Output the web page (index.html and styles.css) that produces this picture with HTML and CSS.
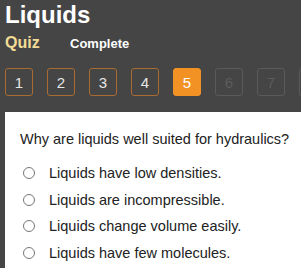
FILE: index.html
```html
<!DOCTYPE html>
<html lang="en">
<head>
  <meta charset="UTF-8" />
  <title>Liquids</title>
  <link rel="stylesheet" href="styles.css">
</head>
<body>
  <div class="header">
    <h1>Liquids</h1>
    <div class="tabs">
      <span class="tab-quiz">Quiz</span>
      <span class="tab-complete">Complete</span>
    </div>
    <div class="steps">
      <span class="step done">1</span>
      <span class="step done">2</span>
      <span class="step done">3</span>
      <span class="step done">4</span>
      <span class="step current">5</span>
      <span class="step">6</span>
      <span class="step">7</span>
      <span class="step">8</span>
    </div>
  </div>

  <div class="panel">
    <p class="question">Why are liquids well suited for hydraulics?</p>
    <label class="option"><span class="radio"></span>Liquids have low densities.</label>
    <label class="option"><span class="radio"></span>Liquids are incompressible.</label>
    <label class="option"><span class="radio"></span>Liquids change volume easily.</label>
    <label class="option"><span class="radio"></span>Liquids have few molecules.</label>
  </div>
</body>
</html>
```

FILE: styles.css
```css
body {
  font-family: 'Liberation Sans', Arial, sans-serif;
  background-color: #454545;
  margin: 0;
  padding: 0;
  overflow: hidden;
}
.header {
  padding-left: 5px;
}
h1 {
  color: #fff;
  font-size: 24px;
  margin: 1px 0 0 0;
  line-height: 28px;
}
.tabs {
  display: flex;
  align-items: baseline;
  margin-top: 5px;
  height: 20px;
}
.tab-quiz {
  color: #f3dc95;
  font-weight: bold;
  font-size: 16px;
  width: 65px;
}
.tab-complete {
  color: #fff;
  font-weight: bold;
  font-size: 13px;
}
.steps {
  display: flex;
  gap: 14px;
  margin-top: 14px;
  white-space: nowrap;
  overflow: hidden;
}
.step {
  flex: none;
  box-sizing: border-box;
  width: 28px;
  height: 28px;
  border: 1px solid #5a5a5a;
  border-radius: 3px;
  color: #5c5c5c;
  font-size: 15px;
  display: flex;
  align-items: center;
  justify-content: center;
}
.step.done {
  border-color: #a86c32;
  color: #e6e6e6;
}
.step.current {
  background-color: #f39224;
  border-color: #f39224;
  color: #fff;
}
.panel {
  background-color: #fff;
  margin: 16px 0 0 5px;
  padding: 19px 0 30px 15px;
  height: 200px;
}
.question {
  margin: 0 0 13px 0;
  font-size: 14.5px;
  color: #222;
}
.option {
  display: flex;
  align-items: center;
  height: 26.5px;
  font-size: 14.5px;
  color: #222;
  padding-left: 3px;
}
.radio {
  box-sizing: border-box;
  width: 12px;
  height: 12px;
  border: 1px solid #767676;
  border-radius: 50%;
  margin-right: 14px;
}
```
